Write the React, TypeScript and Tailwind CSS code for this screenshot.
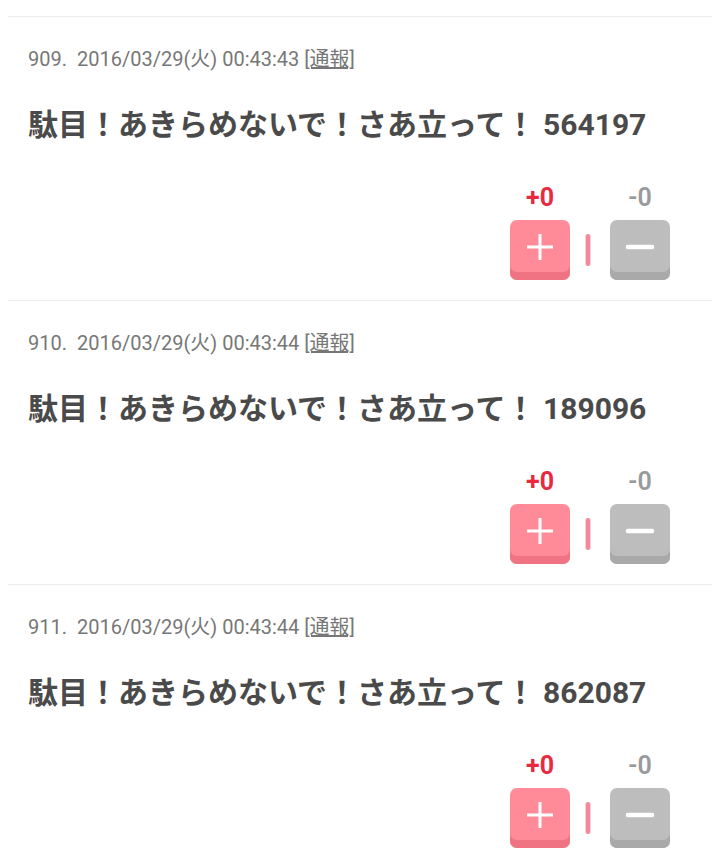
import React from 'react';

interface Post {
  no: number;
  date: string;
  num: string;
}

const posts: Post[] = [
  { no: 909, date: '2016/03/29(火) 00:43:43', num: '564197' },
  { no: 910, date: '2016/03/29(火) 00:43:44', num: '189096' },
  { no: 911, date: '2016/03/29(火) 00:43:44', num: '862087' },
];

const font = "font-['Roboto','Noto_Sans_CJK_JP',sans-serif]";

function VoteBox() {
  return (
    <div className="flex justify-end pr-[42px] mt-[38px]">
      <div className="flex flex-col">
        <div className="flex">
          <div className="w-[60px] text-center text-[25px] leading-[30px] font-bold text-[#e8293f]">+0</div>
          <div className="w-[40px]" />
          <div className="w-[60px] text-center text-[25px] leading-[30px] font-semibold text-[#9a9a9a]">-0</div>
        </div>
        <div className="flex items-center mt-[7px]">
          <button className="w-[60px] h-[60px] rounded-[7px] bg-[#ff8b98] shadow-[inset_0_-8px_0_#ef7383] flex items-start justify-center pt-[13px]">
            <svg width="28" height="28" viewBox="0 0 28 28">
              <path d="M14 1v26M1 14h26" stroke="#fff" strokeWidth="3" />
            </svg>
          </button>
          <div className="ml-[15px] w-[6px] h-[32px] rounded-full bg-[#f0899a] border-x border-[#fbd0d8]" />
          <button className="ml-[19px] w-[60px] h-[60px] rounded-[7px] bg-[#bdbdbd] shadow-[inset_0_-8px_0_#a9a9a9] flex items-start justify-center pt-[24px]">
            <svg width="30" height="6" viewBox="0 0 30 6">
              <path d="M3 3h24" stroke="#fff" strokeWidth="4.5" strokeLinecap="round" />
            </svg>
          </button>
        </div>
      </div>
    </div>
  );
}

export default function App() {
  return (
    <div className={`bg-white min-h-screen pt-4 ${font}`}>
      {posts.map((p) => (
        <div key={p.no} className="mx-2 border-t border-[#ececec] pl-5 pt-[28px] pb-5">
          <div className="text-[20px] leading-[28px] text-[#777]">
            {p.no}.<span className="ml-[10px]">{p.date}</span>{' '}
            <a className="underline">[通報]</a>
          </div>
          <div className="mt-[32px] text-[30px] leading-[40px] font-bold text-[#4a4a4a]">
            駄目！あきらめないで！さあ立って！ {p.num}
          </div>
          <VoteBox />
        </div>
      ))}
    </div>
  );
}
